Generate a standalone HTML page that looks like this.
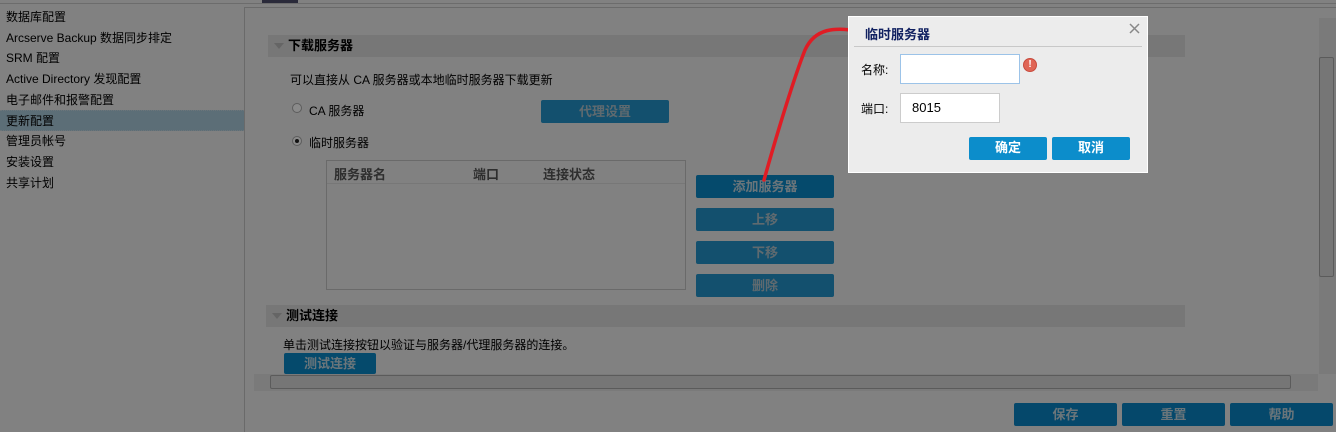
<!DOCTYPE html>
<html><head><meta charset="utf-8"><style>
*{margin:0;padding:0;box-sizing:border-box}
html,body{width:1336px;height:432px;overflow:hidden}
body{font-family:"Liberation Sans","Noto Sans CJK SC",sans-serif;font-size:12px;color:#000}
#page{position:absolute;left:0;top:0;width:1336px;height:432px;background:#eeeeee;overflow:hidden}
.a{position:absolute}
.nav div{height:20.7px;line-height:20px;padding-left:6px;font-size:12px}
.sel{background:#abcbdd;border-top:1px dotted #c8d8e2;border-bottom:1px dotted #c8d8e2}
.bar{background:#dcdcdc;height:22px;font-weight:bold;font-size:13px;line-height:22px;padding-left:20px}
.tri{position:absolute;left:6px;top:8px;width:0;height:0;border-left:5px solid transparent;border-right:5px solid transparent;border-top:6px solid #bbb}
.btn{background:#2394cc;border-radius:2px;color:#b0c4ce;font-weight:bold;text-align:center;font-size:13px}
.b2{background:#0b89c8;color:#c4d8e2}
.dbtn{background:#0c8dcb;color:#fff;border-radius:2px;font-weight:bold;text-align:center;font-size:13px;line-height:22px}
#ov{position:absolute;left:0;top:0;width:1336px;height:432px;background:rgba(0,0,0,0.46)}
</style></head><body><div id="page">
<div class="a" style="left:0;top:3px;width:1336px;height:1px;background:#c8c8c8"></div>
<div class="a" style="left:262px;top:0;width:36px;height:3px;background:#4e4e6c"></div>
<div class="a nav" style="left:0;top:7px;width:244px">
<div>数据库配置</div><div>Arcserve Backup 数据同步排定</div><div>SRM 配置</div><div>Active Directory 发现配置</div><div>电子邮件和报警配置</div><div class="sel">更新配置</div><div>管理员帐号</div><div>安装设置</div><div>共享计划</div>
</div>
<div class="a" style="left:244px;top:7px;width:1px;height:425px;background:#c4c4c4"></div>
<div class="a" style="left:244px;top:7px;width:1092px;height:1px;background:#c4c4c4"></div>
<div class="a bar" style="left:268px;top:35px;width:917px"><span class="tri"></span>下载服务器</div>
<div class="a" style="left:290px;top:71px">可以直接从 CA 服务器或本地临时服务器下载更新</div>
<div class="a" style="left:292px;top:103px;width:10px;height:10px;border:1px solid #aaa;border-radius:50%;background:#fff"></div>
<div class="a" style="left:309px;top:102px">CA 服务器</div>
<div class="a" style="left:292px;top:136px;width:10px;height:10px;border:1px solid #aaa;border-radius:50%;background:#fff"><div style="width:4px;height:4px;background:#222;border-radius:50%;margin:2px"></div></div>
<div class="a" style="left:309px;top:134px">临时服务器</div>
<div class="a btn" style="left:541px;top:100px;width:128px;height:23px;line-height:23px">代理设置</div>
<div class="a" style="left:326px;top:160px;width:360px;height:130px;border:1px solid #c4c4c4"></div>
<div class="a" style="left:327px;top:183px;width:358px;height:1px;background:#dcdcdc"></div>
<div class="a" style="left:334px;top:164px;font-weight:bold;color:#555;font-size:13px">服务器名</div>
<div class="a" style="left:473px;top:164px;font-weight:bold;color:#555;font-size:13px">端口</div>
<div class="a" style="left:543px;top:164px;font-weight:bold;color:#555;font-size:13px">连接状态</div>
<div class="a btn b2" style="left:696px;top:175px;width:138px;height:23px;line-height:23px">添加服务器</div>
<div class="a btn" style="left:696px;top:208px;width:138px;height:23px;line-height:23px">上移</div>
<div class="a btn" style="left:696px;top:241px;width:138px;height:23px;line-height:23px">下移</div>
<div class="a btn" style="left:696px;top:274px;width:138px;height:23px;line-height:23px">删除</div>
<div class="a bar" style="left:266px;top:305px;width:919px"><span class="tri"></span>测试连接</div>
<div class="a" style="left:283px;top:336px">单击测试连接按钮以验证与服务器/代理服务器的连接。</div>
<div class="a btn b2" style="left:284px;top:353px;width:92px;height:21px;line-height:22px">测试连接</div>
<div class="a" style="left:254px;top:374px;width:1064px;height:17px;background:#e2e2e2"></div>
<div class="a" style="left:270px;top:375px;width:1021px;height:14px;border:1px solid #a8a8a8;border-radius:2px;background:#dadada"></div>
<div class="a" style="left:1319px;top:18px;width:17px;height:356px;background:#e2e2e2"></div>
<div class="a" style="left:1319px;top:57px;width:15px;height:220px;border:1px solid #a8a8a8;border-radius:2px;background:#dadada"></div>
<div class="a btn b2" style="left:1014px;top:403px;width:103px;height:23px;line-height:23px;background:#0a86c6">保存</div>
<div class="a btn b2" style="left:1122px;top:403px;width:103px;height:23px;line-height:23px;background:#0a86c6">重置</div>
<div class="a btn b2" style="left:1230px;top:403px;width:103px;height:23px;line-height:23px;background:#0a86c6">帮助</div>
<div id="ov"></div>
<svg class="a" style="left:0;top:0" width="1336" height="432"><path d="M858 31 C835 27 815 28 805 50 C795 75 778 130 764 180" stroke="#e01c24" stroke-width="3.5" fill="none" stroke-linecap="round"/></svg>
<div class="a" style="left:848px;top:16px;width:300px;height:157px;background:#ececec;border:1px solid #fff"></div>
<div class="a" style="left:865px;top:24px;font-weight:bold;font-size:13px;color:#102060">临时服务器</div>
<svg class="a" style="left:1129px;top:23px" width="11" height="11"><path d="M1 1L10 10M10 1L1 10" stroke="#888" stroke-width="1.5"/></svg>
<div class="a" style="left:854px;top:46px;width:288px;height:1px;background:#c8c8c8"></div>
<div class="a" style="left:861px;top:61px">名称:</div>
<div class="a" style="left:900px;top:54px;width:120px;height:30px;background:#fff;border:1px solid #9cc3e8"></div>
<div class="a" style="left:1023px;top:58px;width:14px;height:14px;border-radius:50%;background:#e06555;border:1px solid #c84a3c;color:#fff;font-size:10px;font-weight:bold;text-align:center;line-height:12px">!</div>
<div class="a" style="left:861px;top:100px">端口:</div>
<div class="a" style="left:900px;top:93px;width:100px;height:30px;background:#fff;border:1px solid #ccc;padding-left:11px;line-height:28px;font-size:13px">8015</div>
<div class="a dbtn" style="left:969px;top:137px;width:78px;height:23px">确定</div>
<div class="a dbtn" style="left:1052px;top:137px;width:78px;height:23px">取消</div>
</div></body></html>
